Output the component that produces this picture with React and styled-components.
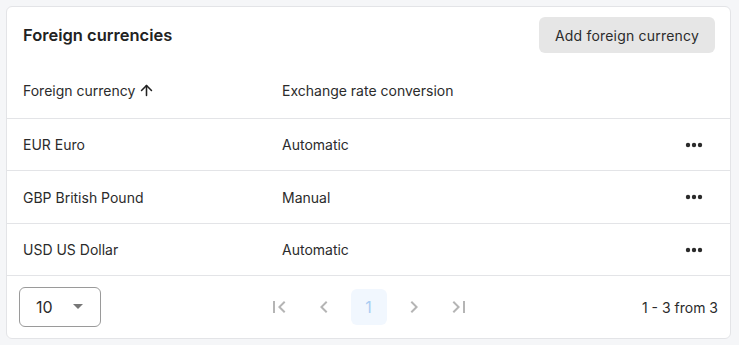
import React from 'react';
import styled, { createGlobalStyle } from 'styled-components';
import { ArrowUp } from 'lucide-react';
import { MdFirstPage, MdLastPage, MdChevronLeft, MdChevronRight } from 'react-icons/md';

const GlobalStyle = createGlobalStyle`
  html, body {
    margin: 0;
    padding: 0;
    background: #f5f6f8;
    font-family: Inter, "Noto Sans", sans-serif;
    color: #2b2b2b;
  }
`;

const rows = [
  { currency: 'EUR Euro', conversion: 'Automatic' },
  { currency: 'GBP British Pound', conversion: 'Manual' },
  { currency: 'USD US Dollar', conversion: 'Automatic' },
];

function App() {
  return (
    <>
      <GlobalStyle />
      <Card>
        <TitleBar>
          <Title>Foreign currencies</Title>
          <AddButton>Add foreign currency</AddButton>
        </TitleBar>
        <HeadRow>
          <Cell>
            Foreign currency
            <ArrowUp size={17} strokeWidth={2.2} color="#222" />
          </Cell>
          <Cell>Exchange rate conversion</Cell>
          <Cell />
        </HeadRow>
        {rows.map((row) => (
          <BodyRow key={row.currency}>
            <Cell>{row.currency}</Cell>
            <Cell>{row.conversion}</Cell>
            <ActionCell>
              <svg width="18" height="6" viewBox="0 0 18 6">
                <circle cx="3" cy="3" r="2.2" fill="#2b2b2b" />
                <circle cx="9" cy="3" r="2.2" fill="#2b2b2b" />
                <circle cx="15" cy="3" r="2.2" fill="#2b2b2b" />
              </svg>
            </ActionCell>
          </BodyRow>
        ))}
        <Footer>
          <PageSize>
            <span>10</span>
            <svg width="10" height="6" viewBox="0 0 10 6">
              <path d="M0 0 L10 0 L5 5 Z" fill="#777" />
            </svg>
          </PageSize>
          <Pager>
            <PageIcon><MdFirstPage size={24} /></PageIcon>
            <PageIcon><MdChevronLeft size={24} /></PageIcon>
            <PageNumber $active>1</PageNumber>
            <PageIcon><MdChevronRight size={24} /></PageIcon>
            <PageIcon><MdLastPage size={24} /></PageIcon>
          </Pager>
          <Range>1 - 3 from 3</Range>
        </Footer>
      </Card>
    </>
  );
}

const Card = styled.div`
  margin: 6px 8px 0 6px;
  height: 333px;
  box-sizing: border-box;
  background: #fff;
  border: 1px solid #e3e4e7;
  border-radius: 6px;
  display: flex;
  flex-direction: column;
`;

const TitleBar = styled.div`
  display: flex;
  align-items: center;
  justify-content: space-between;
  padding: 10px 15px 10px 16px;
`;

const Title = styled.h2`
  margin: 0;
  font-size: 16.5px;
  font-weight: 600;
  color: #222;
`;

const AddButton = styled.button`
  height: 36px;
  padding: 0 16px;
  border: none;
  border-radius: 6px;
  background: #e6e6e6;
  color: #2b2b2b;
  font-family: inherit;
  font-size: 14px;
  letter-spacing: 0.2px;
  cursor: pointer;
`;

const Row = styled.div`
  display: grid;
  grid-template-columns: 259px 1fr 80px;
  align-items: center;
  padding-left: 16px;
  box-sizing: border-box;
  border-bottom: 1px solid #e3e4e7;
  font-size: 14px;
`;

const HeadRow = styled(Row)`
  height: 56px;
`;

const BodyRow = styled(Row)`
  height: 52px;
  &:nth-of-type(4) {
    height: 53px;
  }
`;

const Cell = styled.div`
  display: flex;
  align-items: center;
  gap: 3px;
`;

const ActionCell = styled(Cell)`
  justify-content: flex-end;
  padding-right: 27px;
`;

const Footer = styled.div`
  flex: 1;
  display: grid;
  grid-template-columns: 1fr auto 1fr;
  align-items: center;
  padding: 0 12px 0 12px;
`;

const PageSize = styled.div`
  width: 82px;
  height: 40px;
  box-sizing: border-box;
  border: 1px solid #9a9a9a;
  border-radius: 6px;
  display: flex;
  align-items: center;
  justify-content: space-between;
  padding: 0 17px 0 16px;
  font-size: 16px;
  color: #2b2b2b;
`;

const Pager = styled.div`
  display: flex;
  align-items: center;
  gap: 9px;
`;

const PageIcon = styled.div`
  width: 36px;
  height: 36px;
  display: flex;
  align-items: center;
  justify-content: center;
  color: #b5b5b5;
`;

const PageNumber = styled.div`
  width: 36px;
  height: 36px;
  border-radius: 6px;
  display: flex;
  align-items: center;
  justify-content: center;
  font-size: 16px;
  background: ${(p) => (p.$active ? '#f1f7fe' : 'transparent')};
  color: ${(p) => (p.$active ? '#a9cdf2' : '#2b2b2b')};
`;

const Range = styled.div`
  justify-self: end;
  font-size: 14px;
`;

export default App;
